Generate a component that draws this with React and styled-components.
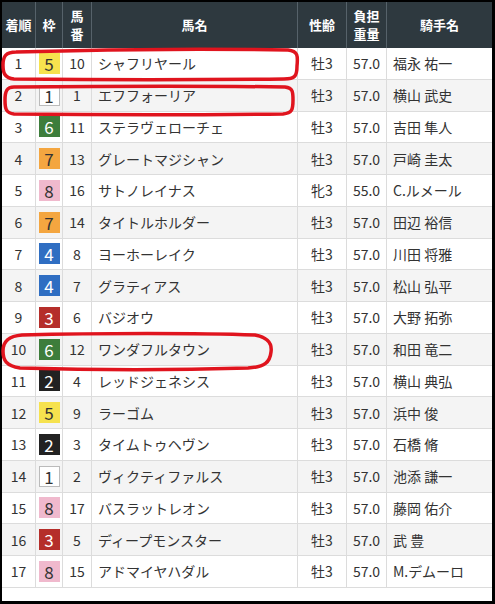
import React from "react";
import styled, { createGlobalStyle } from "styled-components";

const Global = createGlobalStyle`
  html, body { margin: 0; padding: 0; background: #000; }
  body { font-family: "Noto Sans CJK JP", "Noto Sans", sans-serif; }
`;

const COLS = "34px 27px 29px 206px 49px 40px 105px";

const Frame = styled.div`
  position: relative;
  width: 495px;
  height: 604px;
  box-sizing: border-box;
  padding: 2px 3px 3px 2px;
  background: #000;
`;

const Sheet = styled.div`
  background: #fff;
  height: 599px;
  color: #333;
`;

const HeadRow = styled.div`
  display: grid;
  grid-template-columns: ${COLS};
  height: 46px;
  background: #2e393f;
`;

const HeadCell = styled.div`
  display: flex;
  flex-direction: column;
  align-items: center;
  justify-content: center;
  text-align: center;
  color: #fff;
  font-weight: 700;
  font-size: 13px;
  line-height: 18px;
  border-right: 1px solid #56626a;
  &:last-child { border-right: none; }
`;

const Row = styled.div`
  display: grid;
  grid-template-columns: ${COLS};
  height: 31.76px;
  box-sizing: border-box;
  border-bottom: 1px solid #dcdcdc;
  background: ${(p) => (p.$alt ? "#f4f4f4" : "#fff")};
`;

const Cell = styled.div`
  display: flex;
  align-items: center;
  justify-content: ${(p) => (p.$left ? "flex-start" : "center")};
  padding-left: ${(p) => (p.$left ? "6px" : "0")};
  font-size: 14px;
  white-space: nowrap;
  border-right: 1px solid #dcdcdc;
  &:last-child { border-right: none; }
`;

const WAKU = {
  1: { bg: "#fff", fg: "#333", bd: "#bbb" },
  2: { bg: "#222", fg: "#fff", bd: "#222" },
  3: { bg: "#b52e2a", fg: "#fff", bd: "#b52e2a" },
  4: { bg: "#2f6ec2", fg: "#fff", bd: "#2f6ec2" },
  5: { bg: "#f6e24e", fg: "#333", bd: "#f6e24e" },
  6: { bg: "#3d7d3b", fg: "#fff", bd: "#3d7d3b" },
  7: { bg: "#f4a640", fg: "#333", bd: "#f4a640" },
  8: { bg: "#f0b9cd", fg: "#333", bd: "#f0b9cd" },
};

const Waku = styled.span`
  display: flex;
  align-items: center;
  justify-content: center;
  width: 21px;
  height: 21px;
  box-sizing: border-box;
  font-size: 17px;
  line-height: 1;
  background: ${(p) => WAKU[p.$n].bg};
  color: ${(p) => WAKU[p.$n].fg};
  border: 1px solid ${(p) => WAKU[p.$n].bd};
`;

const Marks = styled.svg`
  position: absolute;
  left: 0;
  top: 0;
  pointer-events: none;
`;

const data = [
  [1, 5, 10, "シャフリヤール", "牡3", "57.0", "福永 祐一"],
  [2, 1, 1, "エフフォーリア", "牡3", "57.0", "横山 武史"],
  [3, 6, 11, "ステラヴェローチェ", "牡3", "57.0", "吉田 隼人"],
  [4, 7, 13, "グレートマジシャン", "牡3", "57.0", "戸崎 圭太"],
  [5, 8, 16, "サトノレイナス", "牝3", "55.0", "C.ルメール"],
  [6, 7, 14, "タイトルホルダー", "牡3", "57.0", "田辺 裕信"],
  [7, 4, 8, "ヨーホーレイク", "牡3", "57.0", "川田 将雅"],
  [8, 4, 7, "グラティアス", "牡3", "57.0", "松山 弘平"],
  [9, 3, 6, "バジオウ", "牡3", "57.0", "大野 拓弥"],
  [10, 6, 12, "ワンダフルタウン", "牡3", "57.0", "和田 竜二"],
  [11, 2, 4, "レッドジェネシス", "牡3", "57.0", "横山 典弘"],
  [12, 5, 9, "ラーゴム", "牡3", "57.0", "浜中 俊"],
  [13, 2, 3, "タイムトゥヘヴン", "牡3", "57.0", "石橋 脩"],
  [14, 1, 2, "ヴィクティファルス", "牡3", "57.0", "池添 謙一"],
  [15, 8, 17, "バスラットレオン", "牡3", "57.0", "藤岡 佑介"],
  [16, 3, 5, "ディープモンスター", "牡3", "57.0", "武 豊"],
  [17, 8, 15, "アドマイヤハダル", "牡3", "57.0", "M.デムーロ"],
];

export default function App() {
  return (
    <Frame>
      <Global />
      <Sheet>
        <HeadRow>
          <HeadCell>着順</HeadCell>
          <HeadCell>枠</HeadCell>
          <HeadCell><span>馬</span><span>番</span></HeadCell>
          <HeadCell>馬名</HeadCell>
          <HeadCell>性齢</HeadCell>
          <HeadCell><span>負担</span><span>重量</span></HeadCell>
          <HeadCell>騎手名</HeadCell>
        </HeadRow>
        {data.map(([rank, waku, num, name, sex, wt, jockey], i) => (
          <Row key={rank} $alt={i % 2 === 1}>
            <Cell>{rank}</Cell>
            <Cell><Waku $n={waku}>{waku}</Waku></Cell>
            <Cell>{num}</Cell>
            <Cell $left>{name}</Cell>
            <Cell>{sex}</Cell>
            <Cell>{wt}</Cell>
            <Cell $left>{jockey}</Cell>
          </Row>
        ))}
      </Sheet>
      <Marks width="495" height="604" viewBox="0 0 495 604">
        <g fill="none" stroke="#e0141e" strokeWidth="3.5" strokeLinecap="round">
          <path d="M16 52 C 120 49, 220 49, 288 50 C 298 51, 298 56, 297 66 C 297 76, 295 79, 284 79 C 200 80, 100 80, 14 79 C 4 78, 3 72, 3 65 C 3 56, 6 52, 16 52 Z" />
          <path d="M14 87 C 120 86, 220 86, 285 87 C 293 88, 293 92, 293 100 C 293 110, 292 113, 283 114 C 200 115, 100 115, 14 114 C 6 113, 5 109, 5 100 C 5 91, 7 87, 14 87 Z" />
          <path d="M22 335 C 100 333, 200 333, 255 335 C 270 338, 272 345, 271 352 C 270 362, 265 367, 248 368 C 180 370, 90 370, 20 368 C 6 366, 3 360, 3 351 C 3 340, 10 336, 22 335 Z" />
        </g>
      </Marks>
    </Frame>
  );
}
